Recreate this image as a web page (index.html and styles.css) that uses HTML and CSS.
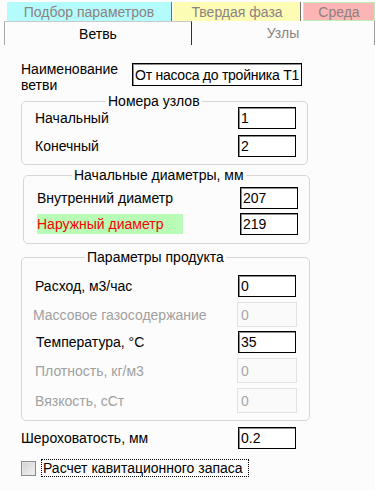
FILE: index.html
```html
<!DOCTYPE html>
<html lang="ru">
<head>
    <meta charset="UTF-8">
    <meta name="viewport" content="width=device-width, initial-scale=1.0">
    <title>Ветвь</title>
    <link rel="stylesheet" href="styles.css">
</head>
<body>
    <div class="tabs-top">
        <div class="tab-top tab-cyan">Подбор параметров</div>
        <div class="tab-top tab-yellow">Твердая фаза</div>
        <div class="tab-top tab-pink">Среда</div>
    </div>
    <div class="tabs-main">
        <div class="tab-main active">Ветвь</div>
        <div class="tab-main">Узлы</div>
    </div>

    <div class="panel">
        <div class="name-row">
            <label class="name-label">Наименование ветви</label>
            <input class="field name-field" type="text" value="От насоса до тройника Т1">
        </div>

        <fieldset class="group group-nodes">
            <legend class="legend-nodes">Номера узлов</legend>
            <div class="row">
                <label>Начальный</label>
                <input class="field" type="text" value="1">
            </div>
            <div class="row gap6">
                <label>Конечный</label>
                <input class="field" type="text" value="2">
            </div>
        </fieldset>

        <fieldset class="group group-diam">
            <legend class="legend-diam">Начальные диаметры, мм</legend>
            <div class="row">
                <label>Внутренний диаметр</label>
                <input class="field" type="text" value="207">
            </div>
            <div class="row gap4">
                <label class="warn">Наружный диаметр</label>
                <input class="field" type="text" value="219">
            </div>
        </fieldset>

        <fieldset class="group group-product">
            <legend class="legend-product">Параметры продукта</legend>
            <div class="row">
                <label>Расход, м3/час</label>
                <input class="field" type="text" value="0">
            </div>
            <div class="row gap5">
                <label class="disabled shift-left">Массовое газосодержание</label>
                <input class="field off" type="text" value="0" disabled>
            </div>
            <div class="row gap4">
                <label class="shift-right">Температура, °C</label>
                <input class="field" type="text" value="35">
            </div>
            <div class="row gap5">
                <label class="disabled">Плотность, кг/м3</label>
                <input class="field off" type="text" value="0" disabled>
            </div>
            <div class="row gap5">
                <label class="disabled">Вязкость, сСт</label>
                <input class="field off" type="text" value="0" disabled>
            </div>
        </fieldset>

        <div class="row rough-row">
            <label>Шероховатость, мм</label>
            <input class="field" type="text" value="0.2">
        </div>

        <div class="check-row">
            <span class="check-box"></span>
            <span class="check-label">Расчет кавитационного запаса</span>
        </div>
    </div>
</body>
</html>
```

FILE: styles.css
```css
body {
    margin: 0;
    background-color: #fcfcfc;
    font-family: "Liberation Sans", Arial, sans-serif;
    font-size: 14px;
    color: #000;
}

/* top coloured tabs */
.tabs-top {
    display: flex;
    height: 19px;
    margin-top: 2px;
    margin-left: 7px;
}
.tab-top {
    box-sizing: border-box;
    height: 19px;
    line-height: 20px;
    text-align: center;
    color: #8c8282;
}
.tab-cyan {
    width: 165px;
    background: #b4fcfc;
    border-right: 1px solid #707070;
}
.tab-yellow {
    width: 127px;
    margin-left: 2px;
    background: #fcfcb4;
    border-right: 1px solid #707070;
}
.tab-pink {
    width: 72px;
    margin-left: 2px;
    background: #fcb4b4;
    border: 1px solid #b8f0b8;
    line-height: 18px;
}

/* second tab row */
.tabs-main {
    display: flex;
    height: 24px;
    margin-left: 4px;
}
.tab-main {
    box-sizing: border-box;
    width: 183px;
    height: 24px;
    line-height: 24px;
    text-align: center;
    color: #8c8282;
    border-right: 1px solid #a0a0a0;
}
.tab-main.active {
    width: 188px;
    color: #000;
    border-left: 1px solid #a8a8a8;
    border-top: 1px solid #c8c8c8;
    border-right: 1px solid #303030;
}

.panel {
    padding-left: 21px;
}

.name-row {
    display: flex;
    align-items: flex-start;
    margin-top: 16px;
}
.name-label {
    width: 111px;
    line-height: 16px;
}
.field {
    box-sizing: border-box;
    width: 58px;
    height: 22px;
    padding: 0 0 0 2px;
    margin: 0;
    border: 1px solid #000;
    box-shadow: inset 1px 1px 0 rgba(0, 0, 0, 0.45);
    background: #fff;
    font-family: "Liberation Sans", Arial, sans-serif;
    font-size: 14px;
    color: #000;
    outline: none;
}
.name-field {
    width: 170px;
    height: 23px;
    margin-top: 2px;
    letter-spacing: -0.25px;
}
.field.off {
    width: 60px;
    height: 25px;
    margin-right: -1px;
    padding-left: 3px;
    border: 1px solid #e2e2e2;
    box-shadow: none;
    background: #fafafa;
    color: #a8a8a8;
}

/* group boxes */
.group {
    box-sizing: border-box;
    margin: 0;
    min-width: 0;
    border: 1px solid #d6d6d6;
    border-radius: 5px;
    padding: 0 13px 7px 13px;
}
.group legend {
    padding: 0 2px;
    height: 12px;
    line-height: 12px;
}
.group-nodes {
    width: 287px;
    margin-top: 2px;
    padding-right: 11px;
}
.legend-nodes {
    margin-left: 71px;
}
.group-diam {
    width: 287px;
    margin-top: 4px;
    margin-left: 2px;
    padding-top: 6px;
    padding-bottom: 8px;
    padding-right: 11px;
}
.legend-diam {
    margin-left: 35px;
}
.group-product {
    width: 289px;
    margin-top: 7px;
    padding-top: 12px;
}
.legend-product {
    margin-left: 50px;
}

.row {
    display: flex;
    align-items: center;
    justify-content: space-between;
}
.gap4 { margin-top: 4px; }
.gap5 { margin-top: 5px; }
.gap6 { margin-top: 6px; }

.warn {
    width: 146px;
    height: 20px;
    line-height: 20px;
    background: #b8fcb8;
    color: #ff0000;
}
.disabled {
    color: #a0a0a0;
}
.shift-left {
    margin-left: -2px;
}
.shift-right {
    margin-left: 1px;
}

.rough-row {
    width: 275px;
    margin-top: 6px;
}

.check-row {
    display: flex;
    align-items: center;
    margin-top: 10px;
}
.check-box {
    box-sizing: border-box;
    width: 15px;
    height: 15px;
    border: 1px solid #8a8a8a;
    background: linear-gradient(135deg, #cfcfcf, #f4f4f4);
    box-shadow: inset 0 0 0 1px #e6e6e6;
}
.check-label {
    margin-left: 5px;
    padding: 0 5px 0 1px;
    line-height: 16px;
    border: 1px dotted #000;
}
```
